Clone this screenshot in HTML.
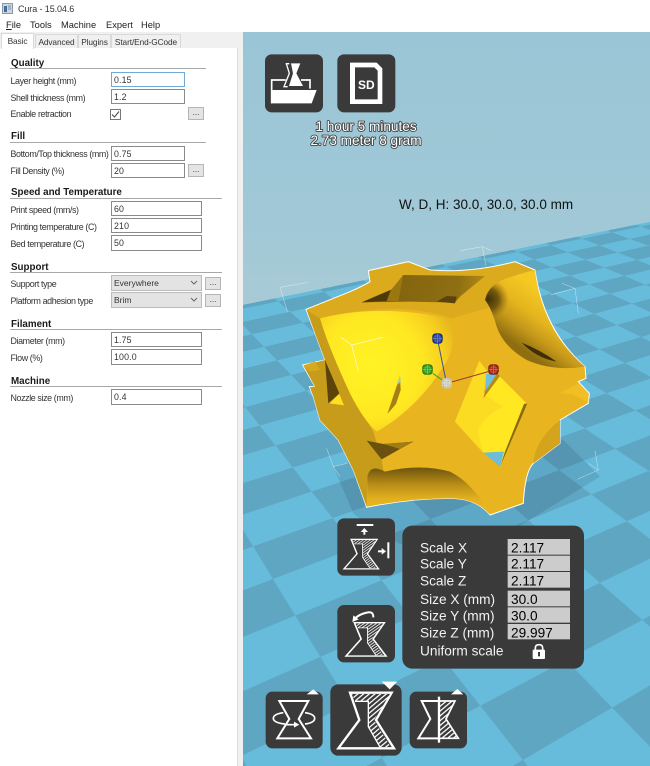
<!DOCTYPE html>
<html>
<head>
<meta charset="utf-8">
<style>
html,body{margin:0;padding:0;width:650px;height:766px;overflow:hidden;background:#fff;font-family:"Liberation Sans",sans-serif;}
.a{position:absolute;white-space:nowrap;}
#left{position:absolute;left:0;top:0;width:243px;height:766px;overflow:hidden;filter:blur(.25px);font-size:8.9px;color:#222;}
.l{position:absolute;left:10.5px;margin-top:.5px;white-space:nowrap;line-height:12px;height:12px;color:#333;font-size:8.9px;letter-spacing:-.38px;}
.h{position:absolute;left:11px;margin-top:1.5px;font-weight:bold;font-size:9.8px;color:#1a1a1a;line-height:12px;white-space:nowrap;}
.r{position:absolute;left:10px;height:1px;background:#a8a8a8;}
.i{position:absolute;left:111px;box-sizing:border-box;border:1px solid #8a8a8a;background:#fff;line-height:14px;padding-left:2px;font-size:8.8px;color:#333;letter-spacing:.15px;}
.s{position:absolute;left:111px;width:91px;height:16px;box-sizing:border-box;border:1px solid #bbb;background:#e3e3e3;line-height:15px;padding-left:2px;color:#333;font-size:8.5px;}
.s svg{position:absolute;right:3px;top:4px;}
.b{position:absolute;width:16px;height:13px;box-sizing:border-box;border:1px solid #b5b5b5;background:#e4e4e4;text-align:center;line-height:9px;font-size:8px;color:#333;}
.t{position:absolute;top:34px;height:14px;box-sizing:border-box;background:#f0f0f0;border:1px solid #d9d9d9;border-bottom:none;line-height:15px;text-align:center;font-size:8.3px;letter-spacing:-.1px;color:#333;white-space:nowrap;overflow:hidden;}
.m{position:absolute;top:19px;font-size:9.3px;line-height:13px;color:#222;white-space:nowrap;}
#sky{position:absolute;left:243px;top:32px;width:407px;height:734px;overflow:hidden;background:linear-gradient(180deg,#9ac5d6 0,#a0c8d7 180px,#a9cbd6 290px);}
#plane{position:absolute;left:-243px;top:-32px;width:1900px;height:2030px;transform-origin:0 0;
transform:matrix3d(1.023,-0.01375,0,0.00055, 0.0542,0.0144,0,-0.000571, 0,0,1,0, -100.566,565.413,0,1.53733);
background:repeating-conic-gradient(#5fa6c3 0 25%,#67bbdb 0 50%);background-size:200px 200px;background-position:0 -70px;}
#over{position:absolute;left:0;top:0;}
.o{font-family:"Liberation Sans",sans-serif;}
</style>
</head>
<body>
<div id="left">
  <svg class="a" style="left:2px;top:3px" width="11" height="11"><rect x=".5" y=".5" width="10" height="10" fill="#cfd6dc" stroke="#8b98a5"/><rect x="2" y="3" width="3" height="6" fill="#3f6f9f"/><rect x="6" y="2" width="3" height="5" fill="#9fb4c4"/></svg>
  <div class="a" style="left:18px;top:3px;font-size:9px;letter-spacing:-.1px;line-height:13px;color:#333">Cura - 15.04.6</div>
  <div class="m" style="left:6px"><u>F</u>ile</div>
  <div class="m" style="left:30px">Tools</div>
  <div class="m" style="left:61px">Machine</div>
  <div class="m" style="left:106px">Expert</div>
  <div class="m" style="left:141px">Help</div>

  <div class="a" style="left:0;top:32px;width:243px;height:734px;background:#f0f0f0"></div>
  <div class="a" style="left:0;top:48px;width:238px;height:718px;background:#fff;border-right:1px solid #dcdcdc;box-sizing:border-box"></div>
  <div class="t" style="left:1px;top:33px;width:33px;height:16px;background:#fff;line-height:14px;">Basic</div>
  <div class="t" style="left:35px;width:43px">Advanced</div>
  <div class="t" style="left:78px;width:33px">Plugins</div>
  <div class="t" style="left:111px;width:70px">Start/End-GCode</div>

  <div class="h" style="top:56px">Quality</div><div class="r" style="top:68px;width:196px"></div>
  <div class="l" style="top:74px">Layer height (mm)</div><div class="i" style="top:72px;width:74px;height:15px;border-color:#6fa8dc">0.15</div>
  <div class="l" style="top:91px">Shell thickness (mm)</div><div class="i" style="top:89px;width:74px;height:15px">1.2</div>
  <div class="l" style="top:107px">Enable retraction</div>
  <svg class="a" style="left:110px;top:109px" width="11" height="11"><rect x=".5" y=".5" width="10" height="10" fill="#fff" stroke="#777"/><path d="M2 5.5l2.5 2.5L9 2.5" fill="none" stroke="#444"/></svg>
  <div class="b" style="left:188px;top:107px">...</div>

  <div class="h" style="top:129px">Fill</div><div class="r" style="top:142px;width:196px"></div>
  <div class="l" style="top:147px">Bottom/Top thickness (mm)</div><div class="i" style="top:146px;width:74px;height:15px">0.75</div>
  <div class="l" style="top:164px">Fill Density (%)</div><div class="i" style="top:163px;width:74px;height:15px">20</div>
  <div class="b" style="left:188px;top:164px">...</div>

  <div class="h" style="top:185px">Speed and Temperature</div><div class="r" style="top:198px;width:212px"></div>
  <div class="l" style="top:203px">Print speed (mm/s)</div><div class="i" style="top:201px;width:91px;height:15px">60</div>
  <div class="l" style="top:220px">Printing temperature (C)</div><div class="i" style="top:218px;width:91px;height:15px">210</div>
  <div class="l" style="top:237px">Bed temperature (C)</div><div class="i" style="top:235px;width:91px;height:16px">50</div>

  <div class="h" style="top:260px">Support</div><div class="r" style="top:272px;width:212px"></div>
  <div class="l" style="top:277px">Support type</div>
  <div class="s" style="top:275px">Everywhere<svg width="8" height="6"><path d="M1 1l3 3 3-3" fill="none" stroke="#666"/></svg></div>
  <div class="b" style="left:205px;top:277px">...</div>
  <div class="l" style="top:294px">Platform adhesion type</div>
  <div class="s" style="top:292px">Brim<svg width="8" height="6"><path d="M1 1l3 3 3-3" fill="none" stroke="#666"/></svg></div>
  <div class="b" style="left:205px;top:294px">...</div>

  <div class="h" style="top:317px">Filament</div><div class="r" style="top:329px;width:212px"></div>
  <div class="l" style="top:334px">Diameter (mm)</div><div class="i" style="top:332px;width:91px;height:15px">1.75</div>
  <div class="l" style="top:351px">Flow (%)</div><div class="i" style="top:349px;width:91px;height:16px">100.0</div>

  <div class="h" style="top:374px">Machine</div><div class="r" style="top:386px;width:212px"></div>
  <div class="l" style="top:391px">Nozzle size (mm)</div><div class="i" style="top:389px;width:91px;height:16px">0.4</div>
</div>

<div id="sky"><div id="plane"></div></div>

<svg id="over" width="650" height="766" viewBox="0 0 650 766" xmlns="http://www.w3.org/2000/svg">
<defs>
  <pattern id="hatch" width="11" height="11" patternUnits="userSpaceOnUse" patternTransform="rotate(-40)">
    <rect width="11" height="11" fill="#3a3a3a"/><rect width="11" height="3.8" fill="#fff"/>
  </pattern>
  <radialGradient id="scoop" gradientUnits="userSpaceOnUse" cx="300" cy="350" r="280">
    <stop offset="0" stop-color="#fff324"/><stop offset=".55" stop-color="#ffe822"/><stop offset=".8" stop-color="#f7cf20"/><stop offset="1" stop-color="#e4b31d"/>
  </radialGradient>
  <linearGradient id="scoopR" gradientUnits="userSpaceOnUse" x1="690" y1="250" x2="790" y2="110">
    <stop offset="0" stop-color="#8f6e10"/><stop offset=".3" stop-color="#c4971a"/><stop offset=".6" stop-color="#e5b51e"/><stop offset="1" stop-color="#f5c822"/>
  </linearGradient>
  <radialGradient id="scoopD" gradientUnits="userSpaceOnUse" cx="655" cy="148" r="62">
    <stop offset="0" stop-color="#3f3007"/><stop offset=".5" stop-color="#5a4409" stop-opacity=".8"/><stop offset="1" stop-color="#8f6e10" stop-opacity="0"/>
  </radialGradient>
  <linearGradient id="scoopB" gradientUnits="userSpaceOnUse" x1="0" y1="650" x2="0" y2="770">
    <stop offset="0" stop-color="#6b5110"/><stop offset=".45" stop-color="#b98e16"/><stop offset=".8" stop-color="#e2b01e"/><stop offset="1" stop-color="#e9b520"/>
  </linearGradient>
  <linearGradient id="holeT" gradientUnits="userSpaceOnUse" x1="400" y1="70" x2="640" y2="100">
    <stop offset="0" stop-color="#846510"/><stop offset=".7" stop-color="#8f6f12"/><stop offset="1" stop-color="#b08a14"/>
  </linearGradient>
  <g id="vase">
    <polygon points="330,578 455,578 408,660 462,745 295,745 358,660" fill="#3a3a3a" stroke="#fff" stroke-width="7"/>
    <polygon points="335,582 450,582 438,602 345,602" fill="url(#hatch)"/>
    <polygon points="385,602 438,602 402,660 452,741 420,741 385,680" fill="url(#hatch)"/>
    <path d="M345 604H385V680L420 741" fill="none" stroke="#fff" stroke-width="4"/>
  </g>
</defs>

<!-- Model, coordinates in 3x crop units -->
<g transform="translate(270 250) scale(.33333)">
  <polygon points="190,650 250,790 340,860 480,920 680,870 990,680 880,570 700,520" fill="#123" opacity=".12"/>
  <g stroke="#fff" stroke-width="1.5" stroke-opacity=".65" fill="none">
    <path d="M30 112L115 97M30 112L52 185"/>
    <path d="M875 100L915 115L925 190M915 115L842 135"/>
    <path d="M170 595L190 650L210 680M190 650L232 640"/>
    <path d="M975 603L985 660L955 640M985 660L922 688"/>
    <path d="M570 2L637 -10L665 2M637 -10L648 48"/>
  </g>
  <path id="sil" d="M108 178L240 125Q285 105 300 95L295 62L415 35L480 60Q600 70 735 35L795 60Q820 240 945 350L948 385L925 395L958 430L955 460L870 510L870 580L790 640Q765 665 760 760L660 795Q620 745 540 745Q420 745 290 772L250 660L205 570L150 510L130 440L118 410L135 410L98 345L165 330L135 250Z" fill="#e8b420" stroke="#fff" stroke-width="3"/>
  <!-- top face -->
  <path d="M110 180L240 127Q285 107 302 96L297 64L415 37L480 62Q600 72 735 37L793 62L800 100L650 175L545 205Q440 170 330 178Q220 185 150 205Z" fill="#dcab1d"/>
  <polygon points="275,157 365,118 400,75 645,78 570,140 555,158 420,155" fill="url(#holeT)"/>
  <polygon points="275,157 362,120 350,153" fill="#4e3a08"/>
  <polygon points="500,155 530,138 560,140 555,160" fill="#5b440a"/>
  <polygon points="400,75 365,118 350,153 385,154" fill="#9a7711"/>
  <!-- left side -->
  <path d="M110 180L150 205Q175 290 240 430L310 545L335 630L342 672Q300 640 292 680L290 770L250 660L205 570L150 510L130 440L120 412L135 410L100 346L165 330L135 250Z" fill="#c79c1b"/>
  <polygon points="165,330 208,430 175,460" fill="#5b440a"/>
  <polygon points="178,460 208,432 222,466" fill="#ffdf20"/>
  <polygon points="100,346 135,335 150,360 120,365" fill="#d8a81d"/>
  <!-- big bright scoop -->
  <path d="M150 205Q330 160 535 205C555 250 555 300 520 350C470 430 400 500 320 545Q280 510 240 430Q175 290 150 205Z" fill="url(#scoop)"/>
  <polygon points="390,378 352,492 378,462 392,420" fill="#a67f14"/>
  <polygon points="390,378 382,405 392,395" fill="#8fd0e6"/>
  <path d="M213 262L245 285L338 262M245 285L265 365" fill="none" stroke="#fff" stroke-width="2" stroke-opacity=".8"/>
  <!-- top-right scoop -->
  <path d="M645 150Q655 100 720 82Q770 65 795 60Q815 240 945 350Q850 365 770 330Q700 290 680 230Q665 175 645 150Z" fill="url(#scoopR)"/>
  <path d="M645 150Q655 100 720 82Q770 65 795 60Q815 240 945 350Q850 365 770 330Q700 290 680 230Q665 175 645 150Z" fill="url(#scoopD)"/>
  <path d="M755 278Q810 300 860 335Q800 325 755 278Z" fill="#3f2f06"/>
  <!-- central diamond -->
  <polygon points="628,333 655,368 640,432 688,378 770,460 692,650 640,608 555,515" fill="#ffe721"/>
  <path d="M555 515L628 333L655 368L640 432L700 470Q640 500 625 540Q625 560 640 608Z" fill="#fcdc22"/>
  <polygon points="648,372 682,370 645,425" fill="#6fc0dd"/>
  <polygon points="682,370 690,378 640,445 645,425" fill="#b58b16"/>
  <polygon points="640,608 702,605 690,650" fill="#6cbcda"/>
  <polygon points="690,652 705,605 762,462 772,460" fill="#8a6a10"/>
  <!-- bottom scoop -->
  <path d="M292 680Q300 640 345 665Q450 640 540 665Q610 700 660 795Q620 745 540 745Q420 745 292 770Z" fill="url(#scoopB)"/>
  <polygon points="290,572 340,582 430,575 390,597 335,628" fill="#6a5110"/>
  <polygon points="340,582 430,575 390,597" fill="#a07c14"/>
  <!-- right bits -->
  <polygon points="868,430 925,400 955,430 955,458 905,432" fill="#f1bf24"/>
  <path d="M870 510L870 580L790 640Q795 570 870 510Z" fill="#d3a41c"/>
  <!-- gizmo -->
  <g fill="none">
    <path d="M505 280L528 392" stroke="#3b4f9b" stroke-width="3"/>
    <path d="M488 370L520 392" stroke="#3e9c3a" stroke-width="3"/>
    <path d="M655 365L545 396" stroke="#a03a25" stroke-width="3"/>
    <rect x="488" y="251" width="29" height="29" rx="9" fill="#223a9a" stroke="#12246e" stroke-width="2"/>
    <path d="M495 258h15v15h-15zM502 252v27M489 265h27" stroke="#8fa4e0" stroke-width="1.5"/>
    <rect x="458" y="344" width="29" height="29" rx="9" fill="#2a9a1a" stroke="#156a0c" stroke-width="2"/>
    <path d="M465 351h15v15h-15zM472 345v27M459 358h27" stroke="#a5e08f" stroke-width="1.5"/>
    <rect x="656" y="344" width="29" height="29" rx="9" fill="#a42412" stroke="#741408" stroke-width="2"/>
    <path d="M663 351h15v15h-15zM670 345v27M657 358h27" stroke="#e0908f" stroke-width="1.5"/>
    <rect x="516" y="385" width="29" height="29" rx="9" fill="#c8c4a8" stroke="#bfc6cc" stroke-width="2"/>
    <path d="M523 392h15v15h-15zM530 386v27M517 399h27" stroke="#eee" stroke-width="1.5"/>
  </g>
</g>

<!-- Top icons, coordinates in 3x crop units -->
<g transform="translate(245 30) scale(.33333)">
  <rect x="60" y="73" width="174" height="174" rx="20" fill="#3a3a3a"/>
  <rect x="277" y="73" width="174" height="174" rx="20" fill="#3a3a3a"/>
  <path d="M80 220V150H122M168 150H195V176" fill="none" stroke="#fff" stroke-width="5"/>
  <polygon points="78,180 215,180 200,220 78,220" fill="#fff"/>
  <polygon points="138,100 166,100 154,130 174,168 132,168 144,130" fill="#fff"/>
  <path d="M122 101H133M124 101L133 130L117 170H128" fill="none" stroke="#fff" stroke-width="4"/>
  <polygon points="315,98 395,98 412,115 412,222 315,222" fill="#fff"/>
  <polygon points="330,112 388,112 398,122 398,208 330,208" fill="#3a3a3a"/>
  <text class="o" x="364" y="177" font-size="36" font-weight="bold" fill="#fff" text-anchor="middle">SD</text>
</g>

<g class="o" font-size="13.6" fill="#fff" text-anchor="middle" stroke="#444" stroke-width="1.8" paint-order="stroke" stroke-linejoin="round">
  <text x="366" y="131">1 hour 5 minutes</text>
  <text x="366" y="145">2.73 meter 8 gram</text>
</g>
<text class="o" x="399" y="209" font-size="13.5" fill="#111">W, D, H: 30.0, 30.0, 30.0 mm</text>

<!-- Bottom tools, coordinates in 3x crop units -->
<g transform="translate(240 500) scale(.33333)">
  <rect x="292" y="55" width="173" height="172" rx="20" fill="#3a3a3a"/>
  <rect x="292" y="315" width="173" height="172" rx="20" fill="#3a3a3a"/>
  <rect x="487" y="77" width="545" height="429" rx="30" fill="#3a3a3a"/>
  <rect x="77" y="575" width="171" height="170" rx="20" fill="#3a3a3a"/>
  <rect x="271" y="553" width="214" height="214" rx="24" fill="#3a3a3a"/>
  <rect x="509" y="575" width="172" height="170" rx="20" fill="#3a3a3a"/>

  <!-- scale icon -->
  <use href="#vase" transform="translate(312 118) scale(.62,.53) translate(-295,-578)"/>
  <path d="M350 75H400" stroke="#fff" stroke-width="6"/>
  <polygon points="373,84 362,96 384,96" fill="#fff"/><rect x="370" y="95" width="6" height="9" fill="#fff"/>
  <path d="M445 127V175" stroke="#fff" stroke-width="6"/>
  <polygon points="438,154 425,144 425,164" fill="#fff"/><rect x="414" y="151" width="12" height="6" fill="#fff"/>

  <!-- lay-flat icon -->
  <use href="#vase" transform="translate(318 368) scale(.72,.6) translate(-295,-578)"/>
  <path d="M400 352Q400 332 380 338Q360 342 345 355" fill="none" stroke="#fff" stroke-width="6"/>
  <polygon points="337,366 340,346 356,358" fill="#fff"/>

  <!-- rotate icon -->
  <polygon points="118,603 205,603 176,657 213,715 112,715 148,657" fill="#3a3a3a" stroke="#fff" stroke-width="6"/>
  <path d="M135 672Q100 668 100 655Q100 642 130 638M195 638Q224 642 224 655Q224 668 195 672" fill="none" stroke="#fff" stroke-width="5"/>
  <path d="M135 674H165" stroke="#fff" stroke-width="5"/><polygon points="178,674 162,665 162,683" fill="#fff"/>
  <polygon points="200,583 237,583 220,568" fill="#fff"/>

  <!-- main scale icon -->
  <use href="#vase"/>
  <polygon points="425,545 472,545 449,568" fill="#fff"/>

  <!-- mirror icon -->
  <polygon points="545,603 597,603 597,715 535,715 571,657" fill="#3a3a3a" stroke="#fff" stroke-width="6"/>
  <polygon points="597,603 645,603 618,657 655,715 597,715" fill="url(#hatch)" stroke="#fff" stroke-width="5"/>
  <path d="M597 590V728" stroke="#fff" stroke-width="7"/>
  <polygon points="633,583 670,583 652,567" fill="#fff"/>

  <!-- scale panel -->
  <g fill="#ccc">
    <rect x="803" y="117" width="187" height="47"/><rect x="803" y="167" width="187" height="46"/><rect x="803" y="216" width="187" height="47"/>
    <rect x="803" y="272" width="187" height="47"/><rect x="803" y="322" width="187" height="46"/><rect x="803" y="372" width="187" height="46"/>
  </g>
  <g class="o" font-size="41" fill="#f2f2f2">
    <text x="540" y="157">Scale X</text><text x="540" y="206">Scale Y</text><text x="540" y="256">Scale Z</text>
    <text x="540" y="312">Size X (mm)</text><text x="540" y="361">Size Y (mm)</text><text x="540" y="412">Size Z (mm)</text>
    <text x="540" y="467">Uniform scale</text>
  </g>
  <g class="o" font-size="41" fill="#000">
    <text x="813" y="157">2.117</text><text x="813" y="206">2.117</text><text x="813" y="256">2.117</text>
    <text x="813" y="312">30.0</text><text x="813" y="361">30.0</text><text x="813" y="412">29.997</text>
  </g>
  <path d="M886 450V444Q886 434 897 434Q908 434 908 444V450" fill="none" stroke="#fff" stroke-width="5"/>
  <rect x="878" y="449" width="37" height="28" rx="3" fill="#fff"/>
  <rect x="894" y="456" width="6" height="13" fill="#3a3a3a"/>
</g>
</svg>
</body>
</html>
